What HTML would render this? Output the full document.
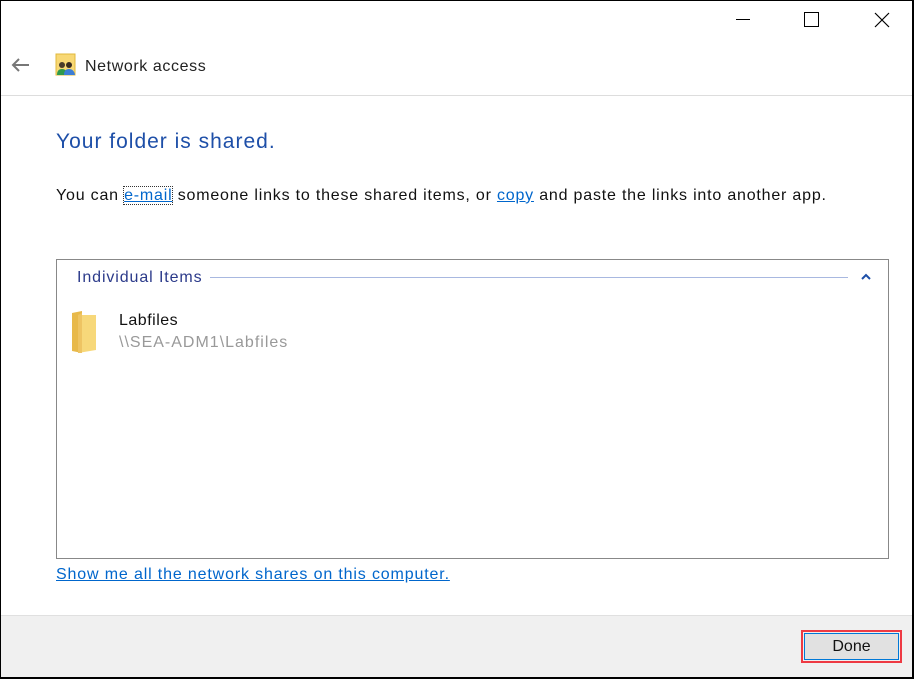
<!DOCTYPE html>
<html><head><style>
*{margin:0;padding:0;box-sizing:border-box}
body{width:914px;height:679px;overflow:hidden;background:#fff;font-family:"Liberation Sans",sans-serif;position:relative}
.frame{position:absolute;left:0;top:0;width:914px;height:679px;border:1px solid #000;border-bottom-width:2px;border-right-width:2px}
.a{position:absolute;white-space:nowrap}
a{color:#0066cc;text-decoration:underline}
</style></head><body>
<div class="a" style="left:736px;top:19px;width:14px;height:1px;background:#000"></div>
<div class="a" style="left:804px;top:12px;width:15px;height:15px;border:1px solid #000"></div>
<svg class="a" style="left:874px;top:12px" width="16" height="16"><path d="M1 1L15 15M15 1L1 15" stroke="#000" stroke-width="1.2"/></svg>
<svg class="a" style="left:10px;top:57px" width="20" height="16"><path d="M19 8H3M9 2L3 8L9 14" stroke="#777" stroke-width="2" fill="none"/></svg>
<svg class="a" style="left:55px;top:53px" width="22" height="24"><rect x="1" y="1" width="19" height="21" fill="#f8d875" stroke="#e0b83c"/><circle cx="7" cy="12" r="3" fill="#4a3b2a"/><path d="M2 22q0-6 5-6t5 6z" fill="#2f9a4c"/><circle cx="14" cy="12" r="3" fill="#3a2c20"/><path d="M9 22q0-6 5-6t6 6z" fill="#3c7ed6"/></svg>
<div class="a" style="left:85px;top:58px;font-size:16px;color:#222;letter-spacing:0.6px">Network access</div>
<div class="a" style="left:1px;top:95px;width:911px;height:1px;background:#ddd"></div>
<div class="a" style="left:56px;top:130px;font-size:21px;color:#1e4fa8;letter-spacing:1px">Your folder is shared.</div>
<div class="a" style="left:56px;top:187px;font-size:16px;color:#111;letter-spacing:0.8px">You can <a style="outline:1px dotted #333">e-mail</a> someone links to these shared items, or <a>copy</a> and paste the links into another app.</div>
<div class="a" style="left:56px;top:259px;width:833px;height:300px;border:1px solid #888"></div>
<div class="a" style="left:77px;top:269px;font-size:16px;color:#2b3a8a;letter-spacing:0.9px">Individual Items</div>
<div class="a" style="left:210px;top:277px;width:638px;height:1px;background:#a8b8e0"></div>
<svg class="a" style="left:860px;top:272px" width="12" height="10"><path d="M2 7L6 3L10 7" stroke="#1e4fa8" stroke-width="2" fill="none"/></svg>
<svg class="a" style="left:72px;top:311px" width="28" height="44"><path d="M0 2L10 0V42L0 40Z" fill="#e8b94a"/><path d="M6 4H24V39L6 42Z" fill="#f7d87a"/><path d="M6 4L10 2V42L6 42Z" fill="#eec463"/></svg>
<div class="a" style="left:119px;top:312px;font-size:16px;color:#111;letter-spacing:0.5px">Labfiles</div>
<div class="a" style="left:119px;top:334px;font-size:16px;color:#999;letter-spacing:1px">\\SEA-ADM1\Labfiles</div>
<div class="a" style="left:56px;top:566px;font-size:16px;letter-spacing:0.85px"><a>Show me all the network shares on this computer.</a></div>
<div class="a" style="left:1px;top:615px;width:911px;height:62px;background:#f0f0f0;border-top:1px solid #e0e0e0"></div>
<div class="a" style="left:801px;top:630px;width:101px;height:33px;border:2px solid #ee3a43;padding:1px">
<div style="width:100%;height:100%;background:#e1e1e1;border:1px solid #0078d7;font-size:16px;color:#111;text-align:center;line-height:25px">Done</div></div>
<div class="frame"></div>
</body></html>
